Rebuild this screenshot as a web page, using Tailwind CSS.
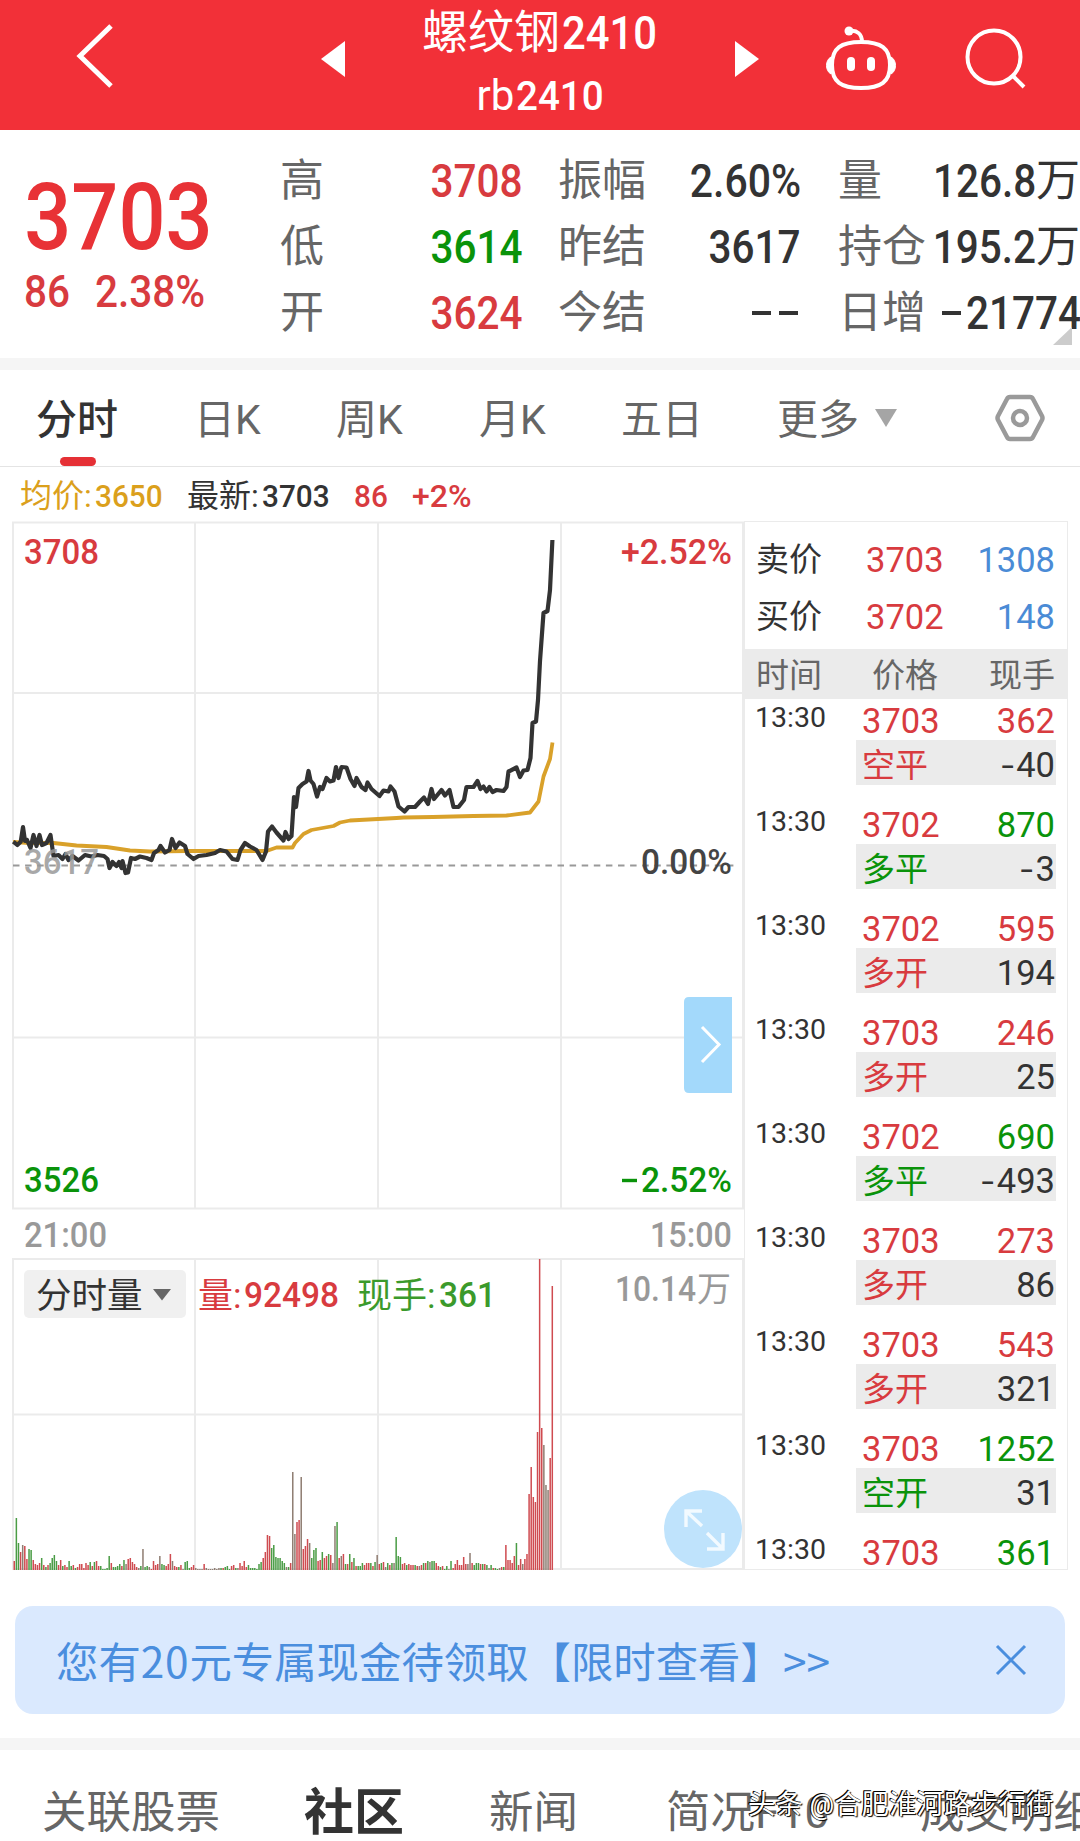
<!DOCTYPE html>
<html lang="zh-CN">

<head>
    <meta charset="UTF-8">
    <meta name="viewport" content="width=device-width, initial-scale=1.0">
    <title>螺纹钢2410</title>
    <script src="https://cdn.jsdelivr.net/npm/@tailwindcss/browser@4"></script>
    <style>
        body {
            font-family: Roboto, 'Noto Sans CJK SC', sans-serif;
        }
    </style>
</head>

<body class="w-[1080px] h-[1841px] overflow-hidden bg-white text-[#333] whitespace-nowrap">
    <!-- Header -->
    <header class="h-[130px] bg-[#f23038] flex items-start text-white">
        <svg class="w-[40px] h-[70px] ml-[75px] mt-[21px] shrink-0" viewBox="0 0 40 70" fill="none" stroke="#fff" stroke-width="5">
            <path d="M36 5L5 35L36 65" />
        </svg>
        <svg class="w-[24px] h-[36px] ml-[206px] mt-[41px] shrink-0" viewBox="0 0 24 36" fill="#fff">
            <path d="M0 18L24 0V36Z" />
        </svg>
        <div class="w-[390px] flex flex-col items-center shrink-0">
            <div class="flex h-[64px] items-center text-[46px] leading-none">
                <span>螺纹钢</span>
                <span class="w-[96px] ml-[2px] text-[47px] font-medium scale-x-[.89] origin-left">2410</span>
            </div>
            <div class="flex h-[64px] items-center text-[42px] leading-none">
                <span>rb</span>
                <span class="w-[87px] ml-[2px] text-[41px] font-medium scale-x-[.94] origin-left">2410</span>
            </div>
        </div>
        <svg class="w-[24px] h-[36px] mt-[41px] shrink-0" viewBox="0 0 24 36" fill="#fff">
            <path d="M24 18L0 0V36Z" />
        </svg>
        <!-- Robot -->
        <svg class="w-[74px] h-[70px] ml-[65px] mt-[22px] shrink-0" viewBox="0 0 74 70" fill="none" stroke="#fff" stroke-width="4">
            <path d="M37 20C57 20 66 26 66 43C66 60 57 66 37 66C17 66 8 60 8 43C8 26 17 20 37 20Z" />
            <path d="M26 9C33 8 38 12 38 20" />
            <circle cx="25" cy="9" r="4.5" fill="#fff" stroke="none" />
            <path d="M7 35C1 38 1 49 7 52ZM67 35C73 38 73 49 67 52Z" fill="#fff" stroke-width="1" />
            <rect x="23" y="35" width="8" height="14" rx="4" fill="#fff" stroke="none" />
            <rect x="43" y="35" width="8" height="14" rx="4" fill="#fff" stroke="none" />
        </svg>
        <svg class="w-[64px] h-[66px] ml-[66px] mt-[26px] shrink-0" viewBox="0 0 64 66" fill="none" stroke="#fff" stroke-width="4">
            <circle cx="30" cy="31" r="26.5" />
            <path d="M49 50L60 61" />
        </svg>
    </header>

    <!-- Quote summary -->
    <section class="relative h-[228px] flex pt-[18px] text-[44px] leading-none">
        <div class="w-[280px] shrink-0 text-[#e83236] font-medium">
            <div class="h-[92px] mt-[24px] pl-[27px] text-[92px] leading-[92px] scale-x-[.9] origin-left font-medium">3703</div>
            <div class="mt-[5px] flex text-[45px] text-[#d83b3f]">
                <span class="w-[71px] ml-[24px] scale-x-[.9] origin-left">86</span>
                <span class="scale-x-[.9] origin-left">2.38%</span>
            </div>
        </div>
        <div class="w-[243px] shrink-0 grid grid-rows-3 h-[198px]">
            <div class="flex justify-between items-center"><span class="text-[#666]">高</span><span class="text-[46px] font-medium scale-x-[.88] origin-right text-[#d83b3f]">3708</span></div>
            <div class="flex justify-between items-center"><span class="text-[#666]">低</span><span class="text-[46px] font-medium scale-x-[.88] origin-right text-[#0a930a]">3614</span></div>
            <div class="flex justify-between items-center"><span class="text-[#666]">开</span><span class="text-[46px] font-medium scale-x-[.88] origin-right text-[#d83b3f]">3624</span></div>
        </div>
        <div class="w-[243px] ml-[35px] shrink-0 grid grid-rows-3 h-[198px]">
            <div class="flex justify-between items-center"><span class="text-[#666]">振幅</span><span class="text-[46px] font-medium scale-x-[.89] origin-right">2.60%</span></div>
            <div class="flex justify-between items-center"><span class="text-[#666]">昨结</span><span class="text-[46px] font-medium scale-x-[.88] origin-right">3617</span></div>
            <div class="flex justify-between items-center"><span class="text-[#666]">今结</span><span class="flex gap-[8px] mr-[3px]"><i class="w-[19px] h-[4px] bg-[#333]"></i><i class="w-[19px] h-[4px] bg-[#333]"></i></span></div>
        </div>
        <div class="w-[242px] ml-[37px] shrink-0 grid grid-cols-1 grid-rows-3 h-[198px]">
            <div class="flex items-center"><span class="text-[#666]">量</span><span class="ml-auto text-[46px] font-medium scale-x-[.88] origin-right">126.8</span><span class="w-[44px]">万</span></div>
            <div class="flex items-center"><span class="text-[#666]">持仓</span><span class="-ml-[20px] grow text-right text-[46px] font-medium scale-x-[.88] origin-right">195.2</span><span class="w-[44px]">万</span></div>
            <div class="flex items-center"><span class="text-[#666]">日增</span><i class="w-[19px] h-[4px] ml-[16px] shrink-0 bg-[#333]"></i><span class="ml-[5px] text-[46px] font-medium scale-x-[.88] origin-left">21774</span></div>
        </div>
        <svg class="absolute left-[1053px] top-[197px] w-[19px] h-[18px]" viewBox="0 0 19 18" fill="#ccc"><path d="M19 0V18H0Z" /></svg>
    </section>

    <div class="h-[12px] bg-[#f5f5f5]"></div>

    <!-- Period tabs -->
    <nav class="relative h-[97px] border-b border-[#e4e4e4] flex items-center text-[41px] leading-none text-[#666]">
        <span class="w-[161px] pl-[36px] pt-[4px] font-medium text-[#333]">分时</span>
        <span class="w-[139px] pl-[33px] pt-[4px]">日K</span>
        <span class="w-[143px] pl-[36px] pt-[4px]">周K</span>
        <span class="w-[143px] pl-[36px] pt-[4px]">月K</span>
        <span class="w-[156px] pl-[35px] pt-[4px]">五日</span>
        <span class="w-[133px] pl-[35px] pt-[4px]">更多</span>
        <svg class="w-[22px] h-[18px]" viewBox="0 0 22 18" fill="#a5a5a5"><path d="M0 0H22L11 18Z" /></svg>
        <svg class="w-[50px] h-[48px] ml-[98px]" viewBox="0 0 50 48" fill="none" stroke="#9a9a9a" stroke-width="4.5" stroke-linejoin="round">
            <path d="M15 3H35Q37 3 38 5L47 22Q48 24 47 26L38 43Q37 45 35 45H15Q13 45 12 43L3 26Q2 24 3 22L12 5Q13 3 15 3Z" />
            <circle cx="25" cy="24" r="7" />
        </svg>
        <i class="absolute left-[60px] bottom-0 w-[36px] h-[9px] rounded-full bg-[#e53035]"></i>
    </nav>

    <!-- Legend -->
    <div class="h-[54px] flex items-center pt-[4px] text-[32px] leading-none">
        <span class="ml-[20px] w-[75px] text-[#dba01c]">均价:</span>
        <span class="w-[92px] font-medium scale-x-[.93] origin-left text-[#dba01c]">3650</span>
        <span class="w-[75px]">最新:</span>
        <span class="w-[92px] font-medium scale-x-[.93] origin-left">3703</span>
        <span class="w-[58px] font-medium scale-x-[.93] origin-left text-[#d83b3f]">86</span>
        <span class="font-medium scale-x-[1] origin-left text-[#d83b3f]">+2%</span>
    </div>

    <main class="h-[1049px] flex">
        <!-- Charts -->
        <svg class="w-[744px] h-[1049px] shrink-0" viewBox="0 0 744 1049">
            <g fill="none" stroke="#ebebeb" stroke-width="2">
                <path d="M13 1.5H743V687.5H13ZM195 1V688M378 1V688M561 1V688M13 172H743M13 516.5H743" />
                <path d="M13 738H743V1048H13ZM195 738V1048M378 738V1048M561 738V1048M13 893.5H743" />
            </g>
            <path d="M13 344.5H738" stroke="#999" stroke-width="2" stroke-dasharray="6.5 5.6" />
            <path fill="none" stroke="#d9a12a" stroke-width="3.8" stroke-linejoin="round" d="M13 321L30 322L53.5 322L76.5 324.5L106.5 326L130 329.5L150 330.5L187 330L266.5 330L276.5 326.5L292.5 326.5L295 322L303.5 313L311.5 309L333.5 305L340 301.5L350 299.5L378 298L396.5 297L403.5 296.5L433 296L473.5 295L506.5 294.5L530 291.5L538.5 280.5L543.5 255.5L550 238L552.5 221.5" />
            <path fill="none" stroke="#333" stroke-width="4.2" stroke-linejoin="round" d="M13.3 320.7L17.3 324L20.7 320.7L23 306L25 320L27 319L30.5 327L33.5 314L36.5 325L39.5 314L42 324L46.5 322L50.5 314L53.5 335L58.5 334L62.5 338L65.5 333L68.5 339L72.5 335L78.5 339.5L85 334L91.5 335.5L97.5 334L104 335L107.5 338L109.5 347L112.5 341L116.5 345L119 341L121.5 347L122.5 340L125.5 352L128 351.5L131 337L135 338L140 335.5L146.5 337L151.5 339L154 332L158.5 329L160.5 325L165 331.5L169.5 329L172 318L175.5 327L179.5 321.5L185 325L187.5 333L193.5 338L198.5 335L206.5 334L215 332L220 329L226.5 330.5L232.5 338L237.5 339L240.5 329L245 322L250 325.5L256.5 329L262.5 339L266 330.5L268 310.5L272 305.5L276.5 311.5L283.5 319.5L285.5 311L288.5 318L291.5 315L294 276L296 286L298.5 267L302.5 263L306.5 260.5L308.5 250L310.5 259.5L313.5 263L317 275.5L320 266L322.5 268L326.5 257L330 260.5L333.5 259.5L336 246L338.5 257L341.5 246L346.5 246.5L350.5 258L354.5 265L356.5 257L361.5 266L365.5 269L367.5 261.5L371.5 268L379.5 275L383.5 269.5L388.5 270.5L390.5 265.5L394.5 270.5L398.5 285.5L404.5 290.5L408.5 286L415 286L420 280.5L424 276.5L428 283L431.5 268L434 278L441.5 269L445 274.5L449.5 269L453.5 286L458.5 286L464 279L466.5 266L473.5 266L477.5 260L480.5 268L483.5 265.5L486.5 270.5L489.5 266L492.5 271L496.5 269L503.5 270L506.5 266L508.5 250.5L516.5 246.5L520 256L523.5 249.5L527.5 249L530.5 237L532.5 202L536 200.5L538 179L540 140L543.5 92L547.5 90L550 69L552.4 19" />
            <g id="volumeBars"></g>

            <!-- Axis labels -->
            <g font-size="35" font-weight="500">
                <text x="24" y="43" textLength="75" lengthAdjust="spacingAndGlyphs" fill="#d83b3f">3708</text>
                <text x="621" y="43" textLength="111" lengthAdjust="spacingAndGlyphs" fill="#d83b3f">+2.52%</text>
                <text x="24" y="353" textLength="75" lengthAdjust="spacingAndGlyphs" fill="#999" fill-opacity=".85">3617</text>
                <text x="641" y="353" textLength="91" lengthAdjust="spacingAndGlyphs" fill="#444">0.00%</text>
                <text x="24" y="671" textLength="75" lengthAdjust="spacingAndGlyphs" fill="#0a930a">3526</text>
                <path d="M622 659.5H637" stroke="#0a930a" stroke-width="3.4" />
                <text x="641" y="671" textLength="91" lengthAdjust="spacingAndGlyphs" fill="#0a930a">2.52%</text>
                <text x="24" y="726" textLength="83" lengthAdjust="spacingAndGlyphs" fill="#999">21:00</text>
                <text x="650" y="726" textLength="82" lengthAdjust="spacingAndGlyphs" fill="#999">15:00</text>
            </g>

            <!-- Volume header -->
            <rect x="24" y="749" width="162" height="48" rx="5" fill="#f0f0f0" />
            <text x="36" y="786.5" font-size="35.5" fill="#333">分时量</text>
            <path d="M153 768H171L162 779.5Z" fill="#666" />
            <g font-size="35" fill="#d83b3f">
                <text x="198" y="786.5">量:</text>
                <text x="244" y="786" font-weight="500" textLength="95" lengthAdjust="spacingAndGlyphs">92498</text>
            </g>
            <g font-size="35" fill="#3b9a2b">
                <text x="357" y="786.5">现手:</text>
                <text x="439" y="786" font-weight="500" textLength="57" lengthAdjust="spacingAndGlyphs">361</text>
            </g>
            <g font-size="35" fill="#999">
                <text x="615" y="780" font-weight="500" textLength="81" lengthAdjust="spacingAndGlyphs">10.14</text>
                <text x="697" y="780" font-size="34">万</text>
            </g>

            <!-- Side drawer handle -->
            <path d="M732 476V572H689Q684 572 684 567V481Q684 476 689 476Z" fill="#a3d9fb" />
            <path d="M702 506L719 523.5L702 541" fill="none" stroke="#fff" stroke-width="3" />

            <!-- Fullscreen -->
            <circle cx="703" cy="1008" r="39" fill="#bfe3fc" />
            <path d="M702 1005L686 990M686 1006V990H702M707 1012L723 1028M723 1012V1028H707" fill="none" stroke="#fff" stroke-opacity=".8" stroke-width="3.4" />
        </svg>

        <!-- Order panel -->
        <aside class="w-[324px] h-[1049px] border border-[#ebebeb] overflow-hidden text-[33px] leading-none">
            <div class="h-[127px] flex flex-col justify-center gap-[24px] pt-[5px]">
                <div class="flex items-center h-[33px] pl-[11px] pr-[12px]"><span class="w-[110px]">卖价</span><span class="pt-[1px] text-[34.5px] text-[#d83b3f]">3703</span><span class="ml-auto pt-[1px] text-[34.5px] text-[#4a8bd6]">1308</span></div>
                <div class="flex items-center h-[33px] pl-[11px] pr-[12px]"><span class="w-[110px]">买价</span><span class="pt-[1px] text-[34.5px] text-[#d83b3f]">3702</span><span class="ml-auto pt-[1px] text-[34.5px] text-[#4a8bd6]">148</span></div>
            </div>
            <div class="h-[50px] bg-[#ebebeb] flex items-center pl-[11px] pr-[12px] pt-[2px] text-[#666]">
                <span class="w-[116px]">时间</span><span>价格</span><span class="ml-auto">现手</span>
            </div>
            <div id="tickList" class="flex flex-col"></div>
        </aside>
    </main>

    <!-- Promo banner -->
    <div class="h-[108px] mt-[36px] mx-[15px] rounded-[18px] bg-[#dae9fe] flex items-center text-[42.4px] leading-none text-[#4a8ede]">
        <span class="ml-[41px] font-['Noto_Sans_CJK_SC']">您有<span class="tracking-[.8px]">20</span>元专属现金待领取【限时查看】&gt;&gt;</span>
        <svg class="w-[32px] h-[32px] ml-auto mr-[38px]" viewBox="0 0 32 32" stroke="#4a8ede" stroke-width="3"><path d="M2 2L30 30M30 2L2 30" /></svg>
    </div>

    <div class="h-[12px] mt-[24px] bg-[#f5f5f5]"></div>

    <!-- Bottom tabs -->
    <nav class="relative h-[91px] overflow-hidden text-[#666] text-[44.5px] leading-none">
        <div class="flex items-center h-[126px]">
            <span class="w-[304px] shrink-0 pl-[42px]">关联股票</span>
            <span class="w-[185px] shrink-0 text-[50px] font-bold text-[#333]">社区</span>
            <span class="w-[177px] shrink-0">新闻</span>
            <span class="w-[254px] shrink-0">简况F10</span>
            <span class="shrink-0">成交明细</span>
        </div>
        <span class="absolute left-[748px] top-[38px] text-[27.4px] leading-[34px] text-white [text-shadow:-1px_-1px_0_#000,-1px_0_0_#222,1px_1px_1px_#000]">头条 @合肥淮河路步行街</span>
    </nav>

    <script>
        const RED = 'text-[#d83b3f]';
        const GREEN = 'text-[#0a930a]';

        // price, volume, volume color, type, type color, position change
        const ticks = [
            [3703, 362, RED, '空平', RED, -40],
            [3702, 870, GREEN, '多平', GREEN, -3],
            [3702, 595, RED, '多开', RED, 194],
            [3703, 246, RED, '多开', RED, 25],
            [3702, 690, GREEN, '多平', GREEN, -493],
            [3703, 273, RED, '多开', RED, 86],
            [3703, 543, RED, '多开', RED, 321],
            [3703, 1252, GREEN, '空开', GREEN, 31],
            [3703, 361, GREEN],
        ];

        const formatDiff = (diff) => diff < 0
            ? `<span class="inline-block scale-x-130 mr-[4px]">-</span>${-diff}`
            : diff;

        document.getElementById('tickList').innerHTML = ticks.map(([price, vol, volColor, type, typeColor, diff]) => `
            <div class="h-[104px] shrink-0 flex">
                <span class="w-[111px] pl-[10px] pt-[5px] text-[28.5px] leading-[28px]">13:30</span>
                <div class="w-[200px]">
                    <div class="h-[41px] pt-[4px] pl-[6px] pr-[1px] flex justify-between text-[34.5px] leading-[36px]">
                        <span class="text-[#d83b3f]">${price}</span><span class="${volColor}">${vol}</span>
                    </div>
                    ${type ? `<div class="h-[45px] pl-[6px] pr-[1px] bg-[#ebebeb] flex justify-between items-center">
                        <span class="pt-[6px] ${typeColor}">${type}</span><span class="pt-[6px] text-[34.5px]">${formatDiff(diff)}</span>
                    </div>` : ''}
                </div>
            </div>`).join('');

        // one bar per minute: height + color key (r up, g down, k flat)
        const volume = `9r 52g 27g 18r 25k 24r 11r 21g 20g 10r 6r 5r 7r 12g 5r 3g 5r 7g 12g 15g 9g 5r 10r 4g 5r 3r 9g 4g 5r 2g
            3r 6r 6r 2r 7r 5r 8g 4r 8g 9r 4r 4g 1g 1g 2g 14g 7r 3g 3g 4g 6g 4r 10g 6k 11r 12r 8r 6r 3r 2k
            4g 21k 3g 4g 3k 1r 9r 5r 6r 14k 6g 5g 4r 6r 16r 9k 4r 3r 3g 5r 1k 8g 9g 2g 3r 5r 2k 1k 1k 1k
            6r 2k 1k 1k 1k 2k 1k 2k 2g 2r 3g 4g 1g 4r 5r 2g 2k 7r 4r 9r 3r 5g 2g 2g 2g 1g 6g 8g 12r 18r
            35r 34r 22g 25g 13g 12g 12g 9g 7g 3k 3g 7r 98k 36k 48r 50r 93k 21r 24r 31r 27k 12g 20g 22g 9r 10r 18g 12r 14r 16g
            15r 7k 44k 48g 12r 14k 16r 6g 6r 16g 8r 12g 4r 4g 4g 7g 5r 7r 7r 7g 4r 8g 15k 6r 7g 8r 3k 7g 5r 7g
            7k 33g 14g 13g 6r 7r 5g 6r 5r 5r 5g 4r 4k 5r 7g 7r 9g 8k 9g 9g 7r 4r 3g 4r 1g 4g 1k 9g 2r 6r
            10r 5r 5r 13r 6r 6k 17k 7r 5g 7g 7g 6r 6g 6r 5g 2k 5g 2r 2g 1g 2k 3r 3g 25r 10r 10r 7r 14r 27g 5r
            11r 6k 11r 16r 76r 103r 73r 68r 138r 311r 142r 125k 85k 80k 112r 284r`.trim().split(/\s+/);
        const barColors = { r: '#cf4b50', g: '#4a9c45', k: '#8f7d72' };

        document.getElementById('volumeBars').innerHTML = volume.map((bar, i) => {
            const h = parseInt(bar);
            const x = (13.5 + i * 2.11).toFixed(2);
            return `<rect x="${x}" y="${1049 - h}" width="1.5" height="${h}" fill="${barColors[bar.slice(-1)]}" />`;
        }).join('');
    </script>
</body>

</html>
